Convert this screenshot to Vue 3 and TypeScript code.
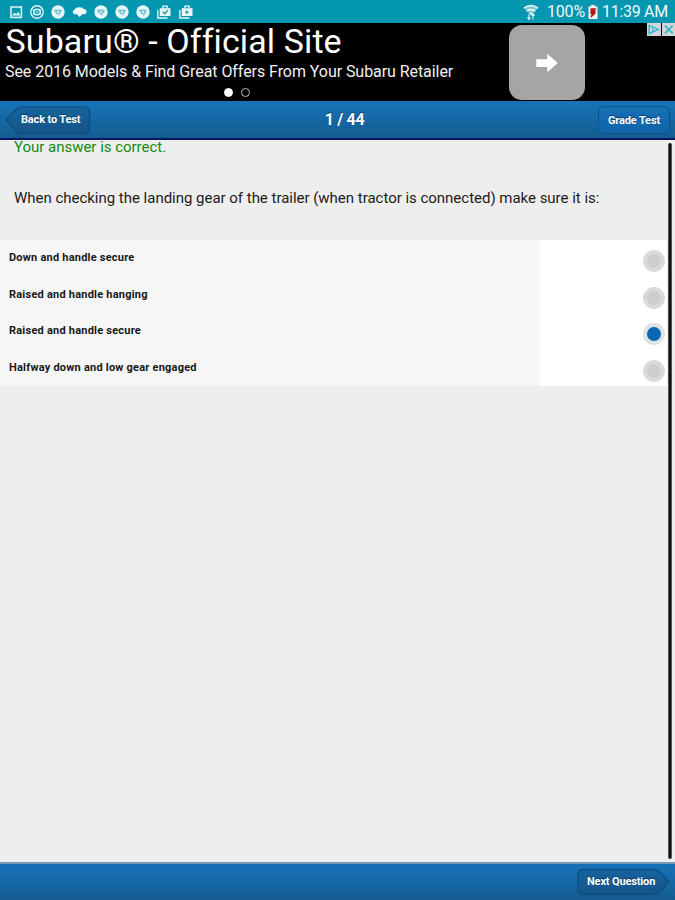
<script setup lang="ts">
import { ref } from 'vue'

type StatusIcon = 'image' | 'at' | 'chrome' | 'cloud' | 'bag' | 'bagplay'

const statusIcons: StatusIcon[] = ['image', 'at', 'chrome', 'cloud', 'chrome', 'chrome', 'chrome', 'bag', 'bagplay']

const answers: string[] = [
  'Down and handle secure',
  'Raised and handle hanging',
  'Raised and handle secure',
  'Halfway down and low gear engaged',
]

const selected = ref(2)
</script>

<template>
  <div class="screen">
    <div class="status">
      <div class="notifications">
        <svg v-for="(icon, i) in statusIcons" :key="i" class="note" viewBox="0 0 16 16">
          <g v-if="icon === 'image'">
            <rect x="3" y="3" width="10.4" height="10.4" fill="none" stroke="#e4f5f8" stroke-width="1.5" />
            <path d="M4 11.5 6.5 8.5 8.3 10.2 10.2 7.8 12.5 11.5Z" fill="#e4f5f8" />
          </g>
          <g v-else-if="icon === 'at'" fill="none" stroke="#dff3f7" stroke-width="1.4">
            <circle cx="8" cy="8" r="6.2" />
            <ellipse cx="8" cy="8" rx="3.4" ry="2.7" />
            <path d="M3.3 5.2 5 6.5M12.7 5.2 11 6.5M6.3 7.3 8 8.5 9.7 7.3M4 11 5.6 9.8M12 11 10.4 9.8" stroke-width="1" />
          </g>
          <g v-else-if="icon === 'chrome'">
            <circle cx="8" cy="8" r="6.7" fill="#e8f6f9" />
            <path d="M4 6.2H11.3L8.5 11.5M4.6 6.4 7.2 10.2" fill="none" stroke="#4db3c6" stroke-width=".9" />
            <circle cx="8.2" cy="7.8" r="1.6" fill="#e8f6f9" stroke="#4db3c6" stroke-width=".8" />
          </g>
          <g v-else-if="icon === 'cloud'" fill="#f2fafb">
            <path d="M2.6 10.2A2.5 2.5 0 0 1 2.8 5.4 5 4.2 0 0 1 11.4 5 2.6 2.6 0 0 1 12.4 10.2H10.2L7.5 13 4.9 10.2Z" />
          </g>
          <g v-else>
            <path d="M1.8 6V14H11.5" fill="none" stroke="#eaf7fa" stroke-width="1.3" />
            <path d="M3.7 4.2H14.5V12H3.7Z" fill="#eaf7fa" />
            <path d="M7 4V2.2H11.2V4" fill="none" stroke="#eaf7fa" stroke-width="1.3" />
            <path v-if="icon === 'bag'" d="M6.8 7.8 8.6 9.7 11.7 6.2" fill="none" stroke="#1595af" stroke-width="1.3" />
            <path v-else d="M7.7 6.3V10.2L11 8.2Z" fill="#1595af" />
          </g>
        </svg>
      </div>
      <svg class="wifi" viewBox="0 0 16 18">
        <path d="M1 5.2C5 1.4 11 1.4 15 5.2L8 12.2Z" fill="#7cc8d7" />
        <path d="M1.2 5.2C5.2 1.6 10.8 1.6 14.8 5.2M3.8 8.2C6 6 10 6 12.2 8.2" fill="none" stroke="#f2fbfc" stroke-width="1.7" />
        <path d="M6.2 9.8 8 12 9.8 9.8Z" fill="#fff" />
        <path d="M6 16.4V11M4.5 14.4 6 16.4 7.4 14.6M10 11V16.6M8.6 12.8 10 10.8 11.6 12.8" fill="none" stroke="#d5f0f5" stroke-width="1.2" />
      </svg>
      <span class="percent">100%</span>
      <svg class="battery" viewBox="0 0 10 16">
        <path d="M3 1H7V2.5H9.5V15H.5V2.5H3Z" fill="#f7eeee" />
        <path d="M2.5 4.3H8L7.2 7.5H8L7 10.2 3.5 13.2H2.3L3.6 10H2.3Z" fill="#b5151b" />
      </svg>
      <span class="clock">11:39 AM</span>
    </div>

    <div class="ad">
      <div class="ad-copy">
        <div class="ad-title">Subaru® - Official Site</div>
        <div class="ad-text">See 2016 Models &amp; Find Great Offers From Your Subaru Retailer</div>
        <div class="dots"><i class="dot on"></i><i class="dot"></i></div>
      </div>
      <div class="ad-go">
        <svg viewBox="0 0 22 20"><path d="M.3 6.3H11.2V.8L21.8 10 11.2 19.2V14H.3Z" fill="#fff" /></svg>
      </div>
      <div class="ad-marks">
        <svg viewBox="0 0 14 13">
          <path d="M2.2 2.2 11.5 6.5 2.2 10.8Z" fill="none" stroke="#2fb3cf" stroke-width="1.4" />
          <path d="M5.8 4.8V8.6" stroke="#2fb3cf" stroke-width="1.3" />
        </svg>
        <svg viewBox="0 0 14 13"><path d="M3 2.5 11 10.5M11 2.5 3 10.5" stroke="#2fb3cf" stroke-width="1.6" /></svg>
      </div>
    </div>

    <header class="bar top">
      <button class="back">
        <svg class="shape" viewBox="0 0 86 29">
          <defs>
            <linearGradient id="backFill" x1="0" y1="0" x2="0" y2="1">
              <stop offset="0" stop-color="#17639f" />
              <stop offset="1" stop-color="#145588" />
            </linearGradient>
          </defs>
          <path d="M1 14.2 12 2.5Q14 1 17 1H79Q84.5 1 84.5 6.5V22Q84.5 27.5 79 27.5H17Q14 27.5 12 26Z" fill="url(#backFill)" stroke="#0f4a7c" stroke-width="1.2" />
        </svg>
        <span class="label back-label">Back to Test</span>
      </button>
      <h1 class="count">1 / 44</h1>
      <button class="grade"><span class="label grade-label">Grade Test</span></button>
    </header>

    <main class="content">
      <div class="page">
        <p class="feedback">Your answer is correct.</p>
        <p class="question">When checking the landing gear of the trailer (when tractor is connected) make sure it is:</p>
        <div class="answers">
          <div v-for="(answer, i) in answers" :key="i" class="answer" @click="selected = i">
            <div class="answer-text">{{ answer }}</div>
            <div class="answer-pick"><span class="radio" :class="{ checked: selected === i }"></span></div>
          </div>
        </div>
      </div>
      <div class="scroll"></div>
    </main>

    <footer class="bar bottom">
      <button class="next">
        <svg class="shape" viewBox="0 0 94 28">
          <defs>
            <linearGradient id="nextFill" x1="0" y1="0" x2="0" y2="1">
              <stop offset="0" stop-color="#17639f" />
              <stop offset="1" stop-color="#145487" />
            </linearGradient>
          </defs>
          <path d="M6.5 1.2H78Q81 1.2 83 3L92.5 13.7 83 25Q81 26.5 78 26.5H6.5Q1 26.5 1 21V6.5Q1 1.2 6.5 1.2Z" fill="url(#nextFill)" stroke="#0f4a7c" stroke-width="1.2" />
        </svg>
        <span class="label next-label">Next Question</span>
      </button>
    </footer>
  </div>
</template>

<style>
body {
  margin: 0;
  background: #eee;
}
</style>

<style scoped>
.screen {
  width: 675px;
  height: 900px;
  display: flex;
  flex-direction: column;
  overflow: hidden;
  background: #eee;
  font-family: Roboto, "Liberation Sans", sans-serif;
}
.status {
  height: 23px;
  flex: none;
  display: flex;
  align-items: center;
  background: #0596b0;
  color: #effafc;
  font-size: 16px;
  line-height: 23px;
  white-space: nowrap;
  box-sizing: border-box;
  padding: 0 7px 0 8px;
}
.notifications {
  display: flex;
  gap: 5.2px;
  flex: 1;
}
.note {
  width: 16px;
  height: 16px;
  display: block;
}
.wifi {
  width: 16px;
  height: 18px;
  margin-right: 8px;
}
.percent {
  width: 41px;
  letter-spacing: -0.2px;
}
.battery {
  width: 10px;
  height: 16px;
  margin-right: 4px;
}
.clock {
  width: 66px;
  letter-spacing: -0.3px;
}
.ad {
  height: 78px;
  flex: none;
  display: flex;
  align-items: flex-start;
  background: #000;
  color: #fff;
  white-space: nowrap;
}
.ad-copy {
  width: 504px;
  padding-left: 5px;
}
.ad-title {
  font-size: 34px;
  line-height: 36px;
  height: 38px;
  padding-left: 0.5px;
  letter-spacing: 0.1px;
}
.ad-text {
  font-size: 16px;
  line-height: 22px;
  color: #f0f0f0;
  letter-spacing: -0.06px;
}
.dots {
  display: flex;
  gap: 8.5px;
  padding: 5px 0 0 218.5px;
}
.dot {
  width: 9px;
  height: 9px;
  box-sizing: border-box;
  border: 1.4px solid #bbb;
  border-radius: 50%;
}
.dot.on {
  background: #fff;
  border-color: #fff;
}
.ad-go {
  width: 76px;
  height: 75px;
  margin-top: 2px;
  border-radius: 13px;
  background: #a5a5a5;
  display: flex;
  align-items: center;
  justify-content: center;
}
.ad-go svg {
  width: 22px;
  height: 20px;
}
.ad-marks {
  margin-left: auto;
  display: flex;
  gap: 1px;
}
.ad-marks svg {
  width: 13.5px;
  height: 13px;
  background: #d3d6d7;
}
.bar {
  flex: none;
  display: flex;
  box-sizing: border-box;
  background: linear-gradient(#1673b9, #145c91);
}
.top {
  height: 38.5px;
  border-bottom: 2px solid #04165c;
  justify-content: space-between;
  align-items: flex-start;
  padding: 5px 5px 0;
}
button {
  border: 0;
  padding: 0;
  background: none;
  font-family: inherit;
  color: #fff;
}
.label {
  font-size: 11px;
  font-weight: 700;
  line-height: 14px;
  white-space: nowrap;
  text-shadow: 0 -1px 1px #0b3a66;
  letter-spacing: -0.15px;
}
.back,
.next {
  display: grid;
  align-items: center;
}
.back > *,
.next > * {
  grid-area: 1 / 1;
}
.back {
  width: 86px;
  height: 29px;
}
.shape {
  display: block;
  width: 100%;
  height: 100%;
}
.back-label {
  text-align: left;
  padding-left: 16px;
  padding-bottom: 2px;
}
.count {
  margin: 0;
  color: #fff;
  font-size: 16px;
  line-height: 28px;
  font-weight: 700;
  letter-spacing: -0.3px;
  text-shadow: 0 -1px 1px #0b3a66;
}
.grade {
  width: 72px;
  height: 28px;
  box-sizing: border-box;
  border: 1px solid #10518a;
  border-radius: 6px;
  background: linear-gradient(#1670b6, #0f64a8);
}
.content {
  height: 722px;
  flex: none;
  display: flex;
  background: #eee;
}
.page {
  width: 667px;
}
.feedback,
.question {
  margin: 0;
  padding-left: 14px;
  font-size: 15px;
  line-height: 18px;
  white-space: nowrap;
  letter-spacing: -0.02px;
}
.feedback {
  color: #128c12;
  height: 49.5px;
  line-height: 15px;
}
.question {
  color: #1b1b1b;
  height: 51px;
}
.answer {
  height: 36.5px;
  display: flex;
}
.answer-text {
  width: 540px;
  background: #f6f6f6;
  box-sizing: border-box;
  padding: 10px 0 0 9px;
  font-size: 11px;
  line-height: 16px;
  font-weight: 700;
  color: #181818;
  letter-spacing: 0.22px;
}
.answer-pick {
  flex: 1;
  display: flex;
  justify-content: flex-end;
  background: #fff;
  padding: 10px 2px 0 0;
}
.radio {
  width: 22px;
  height: 22px;
  box-sizing: border-box;
  border: 4px solid #dadada;
  border-radius: 50%;
  background: #cecece;
}
.radio.checked {
  background: #0868b4;
  border-color: #dfe3e3;
}
.scroll {
  width: 4px;
  height: 716px;
  margin: 3px 0 0 1px;
  border-radius: 2px;
  background: linear-gradient(90deg, #777, #111 35%, #111 65%, #777);
}
.bottom {
  height: 38px;
  margin-top: auto;
  border-top: 2px solid #7c95a8;
  justify-content: flex-end;
  padding: 4px 5px 0 0;
}
.next {
  width: 93px;
  height: 28px;
}
.next-label {
  text-align: left;
  padding-left: 10px;
}
</style>
